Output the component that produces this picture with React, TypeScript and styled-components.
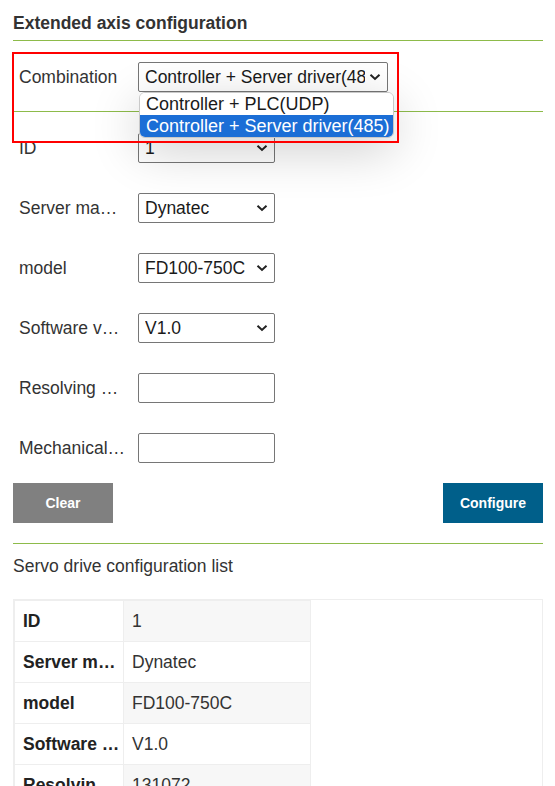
import React from "react";
import styled, { createGlobalStyle } from "styled-components";

const Global = createGlobalStyle`
  html, body { margin: 0; padding: 0; background: #fff; overflow: hidden; }
  body { font-family: "Liberation Sans", Arial, sans-serif; color: #333; }
  * { box-sizing: border-box; }
`;

const GREEN = "#8dbb4a";

const Page = styled.div`
  position: relative;
  width: 555px;
  height: 786px;
  overflow: hidden;
  padding: 0 12px 0 13px;
`;

const SectionTitle = styled.div`
  font-size: 17.5px;
  font-weight: bold;
  line-height: 24px;
  padding: 11px 0 5px;
  border-bottom: 1px solid ${GREEN};
  color: #333;
`;

const ComboSection = styled.div`
  padding: 21px 0 19px 6px;
  border-bottom: 1px solid ${GREEN};
`;

const FieldList = styled.div`
  display: flex;
  flex-direction: column;
  gap: 30px;
  padding: 21px 0 0 6px;
`;

const FieldRow = styled.div`
  display: flex;
  align-items: center;
  height: 30px;
`;

const Label = styled.div`
  width: 107px;
  margin-right: 12px;
  font-size: 17.5px;
  color: #333;
  white-space: nowrap;
  overflow: hidden;
  text-overflow: ellipsis;
`;

const SelectWrap = styled.div`
  position: relative;
`;

const SelectBox = styled.div<{ $w: number }>`
  width: ${(p) => p.$w}px;
  height: 30px;
  border: 1px solid #767676;
  border-radius: 2px;
  background: #fff;
  display: flex;
  align-items: center;
  padding: 0 6px 0 6px;
  font-size: 17.5px;
  color: #1a1a1a;
`;

const SelectText = styled.span`
  flex: 1;
  overflow: hidden;
  white-space: nowrap;
`;

const Chevron = styled.svg`
  flex: none;
  width: 12px;
  height: 8px;
  margin-left: 4px;
`;

const TextInput = styled.div`
  width: 137px;
  height: 30px;
  border: 1px solid #767676;
  border-radius: 2px;
  background: #fff;
`;

const Dropdown = styled.div`
  position: absolute;
  top: 30px;
  left: 1px;
  width: 255px;
  background: #fff;
  border: 1px solid #c9c9c9;
  border-radius: 6px;
  overflow: hidden;
  box-shadow: 0 12px 50px rgba(0, 0, 0, 0.2);
  z-index: 5;
`;

const Option = styled.div<{ $selected?: boolean }>`
  height: 22px;
  line-height: 22px;
  padding-left: 6px;
  font-size: 18px;
  white-space: nowrap;
  color: ${(p) => (p.$selected ? "#fff" : "#1a1a1a")};
  background: ${(p) => (p.$selected ? "#1b6ed6" : "#fff")};
`;

const ButtonBar = styled.div`
  display: flex;
  justify-content: space-between;
  margin-top: 20px;
  padding-bottom: 20px;
  border-bottom: 1px solid ${GREEN};
`;

const Button = styled.button<{ $bg: string }>`
  width: 100px;
  height: 40px;
  border: none;
  background: ${(p) => p.$bg};
  color: #fff;
  font-family: "Liberation Sans", Arial, sans-serif;
  font-size: 14px;
  font-weight: bold;
  padding: 0;
`;

const ListTitle = styled.div`
  font-size: 17.5px;
  line-height: 22px;
  padding: 11px 0 22px;
  color: #333;
`;

const TableBox = styled.div`
  border: 1px solid #eee;
  height: 300px;
`;

const Table = styled.table`
  border-collapse: collapse;
  width: 297px;
  table-layout: fixed;
`;

const LabelCell = styled.td`
  width: 109px;
  height: 41px;
  padding: 0 3px 0 8px;
  border: 1px solid #eee;
  font-size: 17.5px;
  font-weight: bold;
  color: #222;
  white-space: nowrap;
  overflow: hidden;
  text-overflow: ellipsis;
  background: #fff;
`;

const ValueCell = styled.td<{ $striped: boolean }>`
  height: 41px;
  padding: 0 8px;
  border: 1px solid #eee;
  font-size: 17.5px;
  color: #333;
  white-space: nowrap;
  overflow: hidden;
  background: ${(p) => (p.$striped ? "#f7f7f7" : "#fff")};
`;

const Highlight = styled.div`
  position: absolute;
  left: 12px;
  top: 52px;
  width: 387px;
  height: 91px;
  border: 2px solid #f00;
  pointer-events: none;
  z-index: 6;
`;

const ChevronIcon = () => (
  <Chevron viewBox="0 0 12 8">
    <path d="M1.5 1.8 L6 6 L10.5 1.8" fill="none" stroke="#222" strokeWidth="2" />
  </Chevron>
);

const Select = ({ value, width }: { value: string; width: number }) => (
  <SelectBox $w={width}>
    <SelectText>{value}</SelectText>
    <ChevronIcon />
  </SelectBox>
);

const fields: { label: string; value?: string }[] = [
  { label: "ID", value: "1" },
  { label: "Server manufacturer", value: "Dynatec" },
  { label: "model", value: "FD100-750C" },
  { label: "Software version", value: "V1.0" },
  { label: "Resolving power" },
  { label: "Mechanical ratio" },
];

const rows = [
  ["ID", "1"],
  ["Server manufacturer", "Dynatec"],
  ["model", "FD100-750C"],
  ["Software version", "V1.0"],
  ["Resolving power", "131072"],
  ["Mechanical ratio", "1"],
];

export default function App() {
  return (
    <Page>
      <Global />
      <SectionTitle>Extended axis configuration</SectionTitle>
      <ComboSection>
        <FieldRow>
          <Label>Combination</Label>
          <SelectWrap>
            <Select value="Controller + Server driver(485)" width={250} />
            <Dropdown>
              <Option>Controller + PLC(UDP)</Option>
              <Option $selected>Controller + Server driver(485)</Option>
            </Dropdown>
          </SelectWrap>
        </FieldRow>
      </ComboSection>
      <FieldList>
        {fields.map((f) => (
          <FieldRow key={f.label}>
            <Label>{f.label}</Label>
            {f.value !== undefined ? <Select value={f.value} width={137} /> : <TextInput />}
          </FieldRow>
        ))}
      </FieldList>
      <ButtonBar>
        <Button $bg="#808080">Clear</Button>
        <Button $bg="#005f8a">Configure</Button>
      </ButtonBar>
      <ListTitle>Servo drive configuration list</ListTitle>
      <TableBox>
        <Table>
          <tbody>
            {rows.map(([k, v], i) => (
              <tr key={k}>
                <LabelCell>{k}</LabelCell>
                <ValueCell $striped={i % 2 === 0}>{v}</ValueCell>
              </tr>
            ))}
          </tbody>
        </Table>
      </TableBox>
      <Highlight />
    </Page>
  );
}
